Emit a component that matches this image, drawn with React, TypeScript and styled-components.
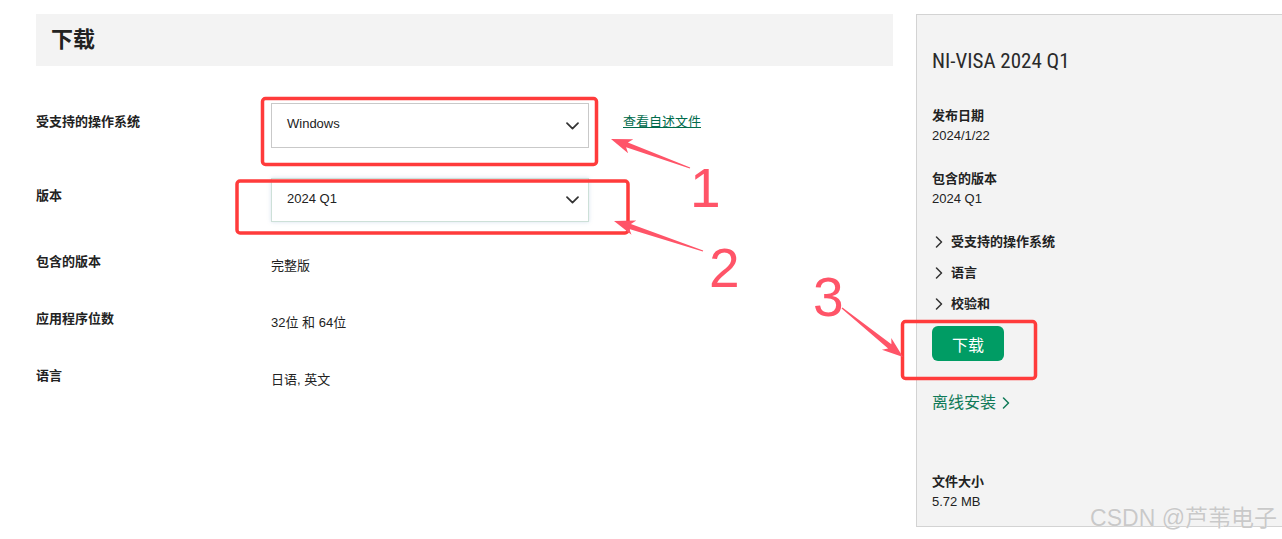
import React from 'react';
import styled, { createGlobalStyle } from 'styled-components';

const GlobalStyle = createGlobalStyle`
  html, body { margin: 0; padding: 0; background: #fff; overflow: hidden; }
  body { font-family: "Liberation Sans", "Noto Sans CJK SC", sans-serif; color: #222; }
  * { box-sizing: border-box; }
`;

const Page = styled.div`
  position: relative;
  width: 1282px;
  height: 539px;
  overflow: hidden;
  display: flex;
  align-items: flex-start;
  gap: 23px;
  padding: 14px 0 0 36px;
`;

const Main = styled.main`
  width: 857px;
  flex: none;
`;

const Header = styled.div`
  height: 52px;
  background: #f3f3f3;
  display: flex;
  align-items: center;
  padding-left: 15px;
`;

const Title = styled.h1`
  margin: 0;
  font-size: 22px;
  font-weight: 700;
  line-height: 1;
  color: #222;
`;

const Form = styled.div`
  margin-top: 37px;
  display: flex;
  flex-direction: column;
`;

const Row = styled.div<{ $h: number }>`
  display: grid;
  grid-template-columns: 235px auto 1fr;
  align-items: start;
  height: ${(p) => p.$h}px;
`;

const Label = styled.div<{ $pt: number }>`
  font-size: 13px;
  font-weight: 700;
  line-height: 19px;
  padding-top: ${(p) => p.$pt}px;
  color: #222;
`;

const Select = styled.div<{ $focused?: boolean; $h: number }>`
  width: 318px;
  height: ${(p) => p.$h}px;
  background: #fff;
  border: 1px solid ${(p) => (p.$focused ? '#cde0d8' : '#c9c9c9')};
  box-shadow: ${(p) => (p.$focused ? '0 0 4px rgba(120,160,200,0.3)' : 'none')};
  display: flex;
  align-items: center;
  justify-content: space-between;
  padding: 0 9px 4px 15px;
  font-size: 13px;
  color: #222;
`;

const Chevron = styled.svg`
  width: 13px;
  height: 8px;
  flex: none;
  margin-top: 4px;
`;

const ReadmeLink = styled.a`
  margin-left: 34px;
  padding-top: 9px;
  font-size: 13px;
  line-height: 19px;
  color: #006b4c;
  text-decoration: underline;
  white-space: nowrap;
`;

const Value = styled.div`
  font-size: 13px;
  line-height: 19px;
  padding-top: 4px;
  color: #222;
  white-space: nowrap;
`;

const Panel = styled.aside`
  width: 380px;
  height: 513px;
  flex: none;
  background: #f3f3f3;
  border: 1px solid #d3d3d3;
  padding: 32px 16px 0 15px;
  display: flex;
  flex-direction: column;
  align-items: flex-start;
`;

const PanelTitle = styled.h2`
  margin: 0;
  font-family: "Liberation Sans Narrow", "Roboto Condensed", Roboto, sans-serif;
  font-size: 21px;
  font-weight: 400;
  line-height: 28px;
  color: #2a2a2a;
`;

const Field = styled.div<{ $mt: number }>`
  margin-top: ${(p) => p.$mt}px;
`;

const FieldLabel = styled.div`
  font-size: 13px;
  font-weight: 700;
  line-height: 20px;
  color: #222;
`;

const FieldValue = styled.div`
  font-size: 13px;
  line-height: 20px;
  color: #222;
`;

const ExpandList = styled.ul`
  list-style: none;
  margin: 23px 0 0;
  padding: 0;
  display: flex;
  flex-direction: column;
  gap: 12px;
`;

const ExpandItem = styled.li`
  display: flex;
  align-items: center;
  gap: 8px;
  font-size: 13px;
  font-weight: 700;
  line-height: 19px;
  color: #222;
  padding-left: 3px;
`;

const SmallChevron = styled.svg`
  width: 8px;
  height: 12px;
  flex: none;
`;

const DownloadButton = styled.button`
  margin-top: 13px;
  width: 72px;
  height: 35px;
  border: none;
  border-radius: 6px;
  background: #009c64;
  color: #fff;
  font-family: "Liberation Sans", "Noto Sans CJK SC", sans-serif;
  font-size: 16px;
  padding: 0;
`;

const OfflineLink = styled.a`
  margin-top: 31px;
  display: flex;
  align-items: center;
  gap: 6px;
  font-size: 16px;
  line-height: 22px;
  color: #107a58;
  text-decoration: none;
`;

const Watermark = styled.div`
  position: absolute;
  right: 5px;
  bottom: 7px;
  font-family: "Liberation Sans", "Noto Sans CJK SC", sans-serif;
  font-size: 23px;
  line-height: 28px;
  color: #c9c9c9;
  text-shadow: 0 0 1px #fff;
  pointer-events: none;
  white-space: nowrap;
`;

const Overlay = styled.svg`
  position: absolute;
  left: 0;
  top: 0;
  width: 1282px;
  height: 539px;
  pointer-events: none;
`;

function arrowPoints(tx: number, ty: number, px: number, py: number): string {
  const dx = px - tx;
  const dy = py - ty;
  const len = Math.hypot(dx, dy);
  const ux = dx / len;
  const uy = dy / len;
  const nx = -uy;
  const ny = ux;
  const headLen = 17;
  const hx = px - ux * headLen;
  const hy = py - uy * headLen;
  const wx = px - ux * (headLen + 4);
  const wy = py - uy * (headLen + 4);
  const pts: [number, number][] = [
    [tx + nx * 0.6, ty + ny * 0.6],
    [hx + nx * 2.6, hy + ny * 2.6],
    [wx + nx * 7.5, wy + ny * 7.5],
    [px, py],
    [wx - nx * 7.5, wy - ny * 7.5],
    [hx - nx * 2.6, hy - ny * 2.6],
    [tx - nx * 0.6, ty - ny * 0.6],
  ];
  return pts.map((p) => `${p[0].toFixed(1)},${p[1].toFixed(1)}`).join(' ');
}

const SelectChevron = () => (
  <Chevron viewBox="0 0 13 8">
    <path d="M1 1.2l5.5 5.5 5.5-5.5" fill="none" stroke="#333" strokeWidth="1.7" strokeLinecap="round" strokeLinejoin="round" />
  </Chevron>
);

const RightChevron = ({ color = '#333' }: { color?: string }) => (
  <SmallChevron viewBox="0 0 8 12">
    <path d="M1.5 1l5 5-5 5" fill="none" stroke={color} strokeWidth="1.5" strokeLinecap="round" strokeLinejoin="round" />
  </SmallChevron>
);

export default function App() {
  return (
    <>
      <GlobalStyle />
      <Page>
        <Main>
          <Header>
            <Title>下载</Title>
          </Header>
          <Form>
            <Row $h={75}>
              <Label $pt={9}>受支持的操作系统</Label>
              <Select $h={45}>
                <span>Windows</span>
                <SelectChevron />
              </Select>
              <ReadmeLink href="#">查看自述文件</ReadmeLink>
            </Row>
            <Row $h={74}>
              <Label $pt={8}>版本</Label>
              <Select $h={44} $focused>
                <span>2024 Q1</span>
                <SelectChevron />
              </Select>
            </Row>
            <Row $h={57}>
              <Label $pt={0}>包含的版本</Label>
              <Value>完整版</Value>
            </Row>
            <Row $h={57}>
              <Label $pt={0}>应用程序位数</Label>
              <Value>32位 和 64位</Value>
            </Row>
            <Row $h={57}>
              <Label $pt={0}>语言</Label>
              <Value>日语, 英文</Value>
            </Row>
          </Form>
        </Main>
        <Panel>
          <PanelTitle>NI-VISA 2024 Q1</PanelTitle>
          <Field $mt={31}>
            <FieldLabel>发布日期</FieldLabel>
            <FieldValue>2024/1/22</FieldValue>
          </Field>
          <Field $mt={23}>
            <FieldLabel>包含的版本</FieldLabel>
            <FieldValue>2024 Q1</FieldValue>
          </Field>
          <ExpandList>
            <ExpandItem>
              <RightChevron />
              受支持的操作系统
            </ExpandItem>
            <ExpandItem>
              <RightChevron />
              语言
            </ExpandItem>
            <ExpandItem>
              <RightChevron />
              校验和
            </ExpandItem>
          </ExpandList>
          <DownloadButton>下载</DownloadButton>
          <OfflineLink href="#">
            离线安装
            <RightChevron color="#107a58" />
          </OfflineLink>
          <Field $mt={58}>
            <FieldLabel>文件大小</FieldLabel>
            <FieldValue>5.72 MB</FieldValue>
          </Field>
        </Panel>
        <Overlay viewBox="0 0 1282 539">
          <g fill="none" stroke="#ff3b3b" strokeWidth="3.5">
            <rect x="262.5" y="98.5" width="334" height="66" rx="3" />
            <rect x="237" y="181" width="391" height="52" rx="3" />
            <rect x="902.5" y="321.5" width="133" height="57" rx="3" />
          </g>
          <g fill="#ff5468">
            <polygon points={arrowPoints(690, 168, 611, 139)} />
            <polygon points={arrowPoints(703, 251, 614, 221)} />
            <polygon points={arrowPoints(842, 308, 903, 357)} />
          </g>
          <g fill="#ff5468" fontFamily='"Liberation Sans", sans-serif' fontSize="55">
            <text x="690" y="207">1</text>
            <text x="709" y="287">2</text>
            <text x="813" y="316">3</text>
          </g>
        </Overlay>
        <Watermark>CSDN @芦苇电子</Watermark>
      </Page>
    </>
  );
}
